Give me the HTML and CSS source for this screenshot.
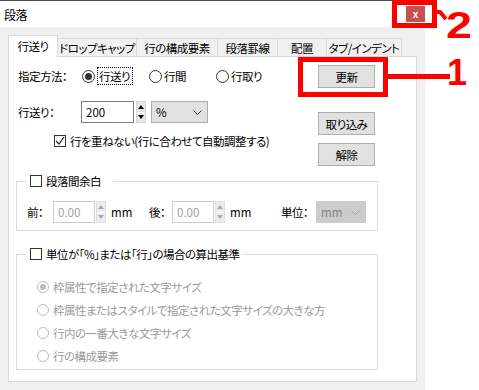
FILE: index.html
```html
<!DOCTYPE html>
<html lang="ja">
<head>
  <meta charset="UTF-8">
  <title>段落</title>
  <link rel="stylesheet" href="styles.css">
</head>
<body>
  <div class="window">
    <div class="titlebar">
      <span class="title">段落</span>
      <span class="close">x</span>
    </div>
    <div class="dlg">
      <div class="tabs">
        <div class="tab active tab-1">行送り</div>
        <div class="tab tab-2">ドロップキャップ</div>
        <div class="tab tab-3">行の構成要素</div>
        <div class="tab tab-4">段落罫線</div>
        <div class="tab tab-5">配置</div>
        <div class="tab tab-6">タブ/インデント</div>
      </div>
      <div class="panel">
        <div class="top">
          <div class="left">
            <div class="row method">
              <span class="lbl">指定方法：</span>
              <span class="opt"><span class="radio checked"></span><span class="focus">行送り</span></span>
              <span class="opt"><span class="radio"></span>行間</span>
              <span class="opt"><span class="radio"></span>行取り</span>
            </div>
            <div class="row spacing">
              <span class="lbl lbl-short">行送り：</span>
              <span class="field pitch">200</span>
              <span class="spin"><span class="up"></span><span class="down"></span></span>
              <span class="select unit">%<svg width="9" height="5" viewBox="0 0 9 5"><polyline points="0.5,0.5 4.5,4.5 8.5,0.5" fill="none" stroke="#333" stroke-width="1"/></svg></span>
            </div>
            <div class="check-row">
              <span class="check on"><svg width="10" height="10" viewBox="0 0 10 10"><polyline points="1,5 4,8 9,1" fill="none" stroke="#222" stroke-width="1.2"/></svg></span>
              <span>行を重ねない(行に合わせて自動調整する)</span>
            </div>
          </div>
          <div class="buttons">
            <button class="btn">更新</button>
            <button class="btn btn-import">取り込み</button>
            <button class="btn btn-clear">解除</button>
          </div>
        </div>

        <fieldset class="group margins">
          <legend class="legend-margins"><span class="check"></span>段落間余白</legend>
          <div class="gap-row">
            <span class="w-front">前：</span>
            <span class="field off">0.00</span>
            <span class="spin off"><span class="up"></span><span class="down"></span></span>
            <span class="mm">mm</span>
            <span class="w-back">後：</span>
            <span class="field off">0.00</span>
            <span class="spin off"><span class="up"></span><span class="down"></span></span>
            <span class="mm">mm</span>
            <span class="w-unit">単位：</span>
            <span class="select off">mm<svg width="9" height="5" viewBox="0 0 9 5"><polyline points="0.5,0.5 4.5,4.5 8.5,0.5" fill="none" stroke="#a8a8a8" stroke-width="1"/></svg></span>
          </div>
        </fieldset>

        <fieldset class="group basis">
          <legend class="legend-basis"><span class="check"></span>単位が「%」または「行」の場合の算出基準</legend>
          <div class="choice"><span class="radio off checked"></span>枠属性で指定された文字サイズ</div>
          <div class="choice"><span class="radio off"></span>枠属性またはスタイルで指定された文字サイズの大きな方</div>
          <div class="choice"><span class="radio off"></span>行内の一番大きな文字サイズ</div>
          <div class="choice"><span class="radio off"></span>行の構成要素</div>
        </fieldset>
      </div>
    </div>
  </div>

  <!-- annotations -->
  <div class="mark mark-close"></div>
  <svg class="hook" width="14" height="16" viewBox="0 0 14 16"><polyline points="0,4 4,4 10,11" fill="none" stroke="#f00" stroke-width="4"/></svg>
  <div class="callout callout-2">2</div>
  <div class="mark mark-update"></div>
  <div class="lead"></div>
  <div class="callout callout-1">1</div>
</body>
</html>
```

FILE: styles.css
```css
* {
  box-sizing: border-box;
}
body {
  margin: 0;
  width: 479px;
  height: 390px;
  overflow: hidden;
  position: relative;
  background: #fff;
  color: #000;
  font-family: "Noto Sans CJK JP", sans-serif;
  font-size: 11.5px;
  letter-spacing: -0.5px;
  font-feature-settings: "palt";
}
.window {
  width: 425px;
  height: 390px;
  background: #f0f0f0;
  border-top: 1px solid #4d4d4d;
}
.titlebar {
  height: 26px;
  background: #fff;
  display: flex;
  justify-content: space-between;
  align-items: center;
  padding-left: 4px;
}
.title {
  font-size: 12px;
}
.close {
  align-self: flex-start;
  margin-top: 5px;
  width: 19px;
  height: 16px;
  background: #c75050;
  color: #fff;
  font: bold 10px "Liberation Sans", sans-serif;
  letter-spacing: 0;
  display: flex;
  align-items: center;
  justify-content: center;
}
.dlg {
  padding: 8px 0 0 8px;
}
.tabs {
  display: flex;
  align-items: flex-end;
  height: 21px;
}
.tab {
  height: 18px;
  background: #f0f0f0;
  border-top: 1px solid #d9d9d9;
  border-right: 1px solid #d9d9d9;
  display: flex;
  align-items: center;
  justify-content: center;
  padding-top: 1px;
  white-space: nowrap;
}
.tab.active {
  height: 22px;
  background: #fff;
  border-left: 1px solid #d9d9d9;
  margin-bottom: -1px;
  position: relative;
  z-index: 1;
  padding-top: 0;
  padding-bottom: 2px;
}
.tab-1 { width: 50px; }
.tab-2 { width: 79px; }
.tab-3 { width: 81px; }
.tab-4 { width: 60px; }
.tab-5 { width: 49px; }
.tab-6 { width: 75px; }
.panel {
  width: 409px;
  height: 326px;
  background: #fff;
  border: 1px solid #d9d9d9;
}
.top {
  display: flex;
  padding: 8px 0 0 9px;
}
.left {
  width: 300px;
}
.row {
  display: flex;
  align-items: center;
  height: 22px;
}
.spacing {
  margin-top: 14px;
}
.lbl {
  width: 64px;
}
.lbl-short {
  width: 63px;
}
.opt {
  width: 67px;
  display: flex;
  align-items: center;
}
.radio {
  width: 13px;
  height: 13px;
  border: 1px solid #333;
  border-radius: 50%;
  margin-right: 2px;
  display: flex;
  align-items: center;
  justify-content: center;
  background: #fff;
  flex-shrink: 0;
}
.radio.checked::after {
  content: "";
  width: 7px;
  height: 7px;
  border-radius: 50%;
  background: #333;
}
.radio.off {
  border-color: #bcbcbc;
}
.radio.off.checked::after {
  background: #bcbcbc;
}
.focus {
  border: 1px dotted #000;
  padding: 0 2px 0 1px;
  line-height: 16px;
}
.field {
  height: 22px;
  border: 1px solid #7a7a7a;
  padding-left: 4px;
  display: flex;
  align-items: center;
  letter-spacing: 0;
}
.pitch {
  width: 53px;
}
.spin {
  width: 10px;
  height: 22px;
  margin-left: 2px;
  display: flex;
  flex-direction: column;
  border: 1px solid #d6d6d6;
  background: #e6e6e6;
}
.spin .up,
.spin .down {
  flex: 1;
  display: flex;
  align-items: center;
  justify-content: center;
}
.spin .up {
  border-bottom: 1px solid #fff;
}
.spin .up::after {
  content: "";
  border-left: 3px solid transparent;
  border-right: 3px solid transparent;
  border-bottom: 4px solid #000;
}
.spin .down::after {
  content: "";
  border-left: 3px solid transparent;
  border-right: 3px solid transparent;
  border-top: 4px solid #000;
}
.spin.off {
  margin-left: 1px;
  background: #ececec;
  border-color: #dedede;
}
.spin.off .up::after {
  border-bottom-color: #a8a8a8;
}
.spin.off .down::after {
  border-top-color: #a8a8a8;
}
.select {
  height: 22px;
  display: flex;
  align-items: center;
  justify-content: space-between;
  padding: 0 5px 0 4px;
  background: #e1e1e1;
  border: 1px solid #adadad;
  letter-spacing: 0;
}
.unit {
  width: 57px;
  margin-left: 5px;
}
.check-row {
  margin-top: 11px;
  height: 13px;
  padding-left: 36px;
  display: flex;
  align-items: center;
}
.check {
  width: 12px;
  height: 12px;
  border: 1px solid #333;
  background: #fff;
  margin-right: 4px;
  display: flex;
  align-items: center;
  justify-content: center;
  flex-shrink: 0;
}
.buttons {
  width: 57px;
  display: flex;
  flex-direction: column;
}
.btn {
  height: 23px;
  padding: 0;
  font: inherit;
  letter-spacing: inherit;
  color: #000;
  background: #e1e1e1;
  border: 1px solid #adadad;
}
.btn-import {
  margin-top: 24px;
}
.btn-clear {
  margin-top: 8px;
}
.group {
  width: 362px;
  margin: 0 0 0 7px;
  padding: 0;
  border: 1px solid #dcdcdc;
  min-width: 0;
}
.group legend {
  display: flex;
  align-items: center;
  height: 14px;
  margin-left: 9px;
  padding: 0 2px 0 4px;
}
.legend-margins {
  padding-right: 12px !important;
}
.margins {
  margin-top: 8px;
  padding: 13px 0 7px 0;
}
.gap-row {
  display: flex;
  align-items: center;
  height: 22px;
  padding-left: 10px;
}
.w-front {
  width: 26px;
}
.w-back {
  width: 23px;
  margin-left: 18px;
}
.w-unit {
  width: 35px;
  margin-left: 31px;
}
.field.off {
  width: 42px;
  border-color: #cccccc;
  color: #a0a0a0;
}
.mm {
  margin-left: 5px;
  width: 20px;
  letter-spacing: 0;
}
.select.off {
  width: 50px;
  background: #cccccc;
  border-color: #cccccc;
  color: #838383;
}
.basis {
  margin-top: 16px;
  padding: 14px 0 2px 0;
}
.choice {
  height: 23px;
  display: flex;
  align-items: center;
  padding-left: 20px;
  color: #9a9a9a;
}
.choice .radio {
  width: 12px;
  height: 12px;
  margin-right: 4px;
}
.choice .radio.checked::after {
  width: 6px;
  height: 6px;
}

/* red markers drawn over the screenshot */
.mark {
  position: absolute;
  border: 5px solid #f00;
}
.mark-close {
  left: 392px;
  top: 0;
  width: 45px;
  height: 28px;
}
.mark-update {
  left: 298px;
  top: 57px;
  width: 90px;
  height: 40px;
}
.hook {
  position: absolute;
  left: 436px;
  top: 8px;
}
.lead {
  position: absolute;
  left: 388px;
  top: 74px;
  width: 62px;
  height: 5px;
  background: #f00;
}
.callout {
  position: absolute;
  color: #f00;
  font: bold 36px/36px "Liberation Sans", sans-serif;
  letter-spacing: 0;
}
.callout-2 {
  left: 446px;
  top: 8px;
  transform: scaleX(1.3);
  transform-origin: left top;
}
.callout-1 {
  left: 447px;
  top: 55px;
}
```
